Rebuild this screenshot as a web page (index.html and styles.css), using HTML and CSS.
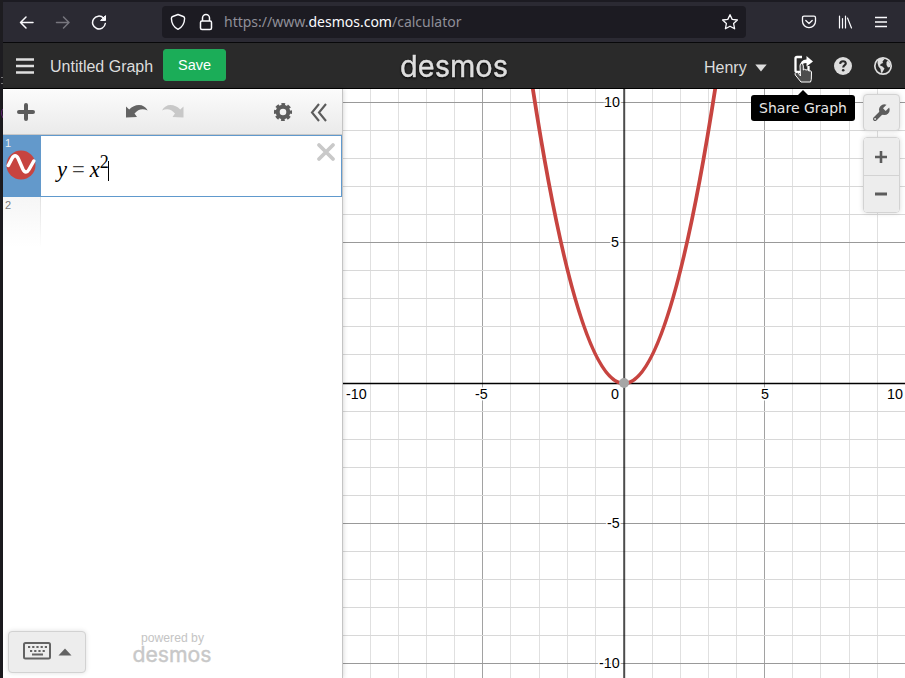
FILE: index.html
```html
<!DOCTYPE html>
<html lang="en">
<head>
<meta charset="utf-8">
<title>Desmos | Graphing Calculator</title>
<link rel="stylesheet" href="styles.css">
</head>
<body>
<div class="screen">
  <div class="edge">
    <svg width="3" height="678" viewBox="0 0 3 678" fill="none"><path d="M1 77.500H3M1 83.500H3" stroke="#777"/><path d="M3 109Q0 112 3 118" stroke="#6b2a80"/></svg>
  </div>
  <div class="window">
    <nav class="browser">
      <svg class="back" width="16" height="16" viewBox="0 0 16 16" fill="none" stroke="#fbfbfe" stroke-width="1.500" stroke-linecap="round" stroke-linejoin="round"><path d="M14 8.500H1.500M7 3L1.500 8.500L7 14"/></svg>
      <svg class="forward" width="16" height="16" viewBox="0 0 16 16" fill="none" stroke="#77767e" stroke-width="1.500" stroke-linecap="round" stroke-linejoin="round"><path d="M1.500 8.500H14M8.500 3L14 8.500L8.500 14"/></svg>
      <svg class="reload" width="16" height="16" viewBox="0 0 16 16" fill="none" stroke="#fbfbfe" stroke-width="1.500" stroke-linecap="round"><path d="M12.500 4A6.400 6.400 0 1 0 14.300 9.500"/><path d="M14.500 2V6.500H10Z" fill="#fbfbfe" stroke-width="1" stroke-linejoin="round"/></svg>
      <div class="address">
        <svg width="16" height="18" viewBox="0 0 16 18" fill="none" stroke="#fbfbfe" stroke-width="1.400" stroke-linejoin="round"><path d="M8 1.500L13.300 3.500Q14.700 4 14.600 5.500C14.500 10.500 12.500 14 8 16.300C3.500 14 1.500 10.500 1.400 5.500Q1.300 4 2.700 3.500Z"/></svg>
        <svg class="lock" width="14" height="18" viewBox="0 0 14 18" fill="none" stroke="#fbfbfe" stroke-width="1.500"><rect x="1.500" y="8" width="11" height="8.500" rx="1.500"/><path d="M3.500 8V5a3.500 3.500 0 0 1 7 0V8"/></svg>
        <span class="url">https://www.<b>desmos.com</b>/calculator</span>
        <svg class="star" width="18" height="18" viewBox="0 0 18 18" fill="none" stroke="#fbfbfe" stroke-width="1.300" stroke-linejoin="round"><path d="M9 1.700L11.200 6.400L16.400 7L12.600 10.500L13.600 15.800L9 13.200L4.400 15.800L5.400 10.500L1.600 7L6.800 6.400Z"/></svg>
      </div>
      <svg class="pocket" width="16" height="16" viewBox="0 0 16 16" fill="none" stroke="#fbfbfe" stroke-width="1.300" stroke-linecap="round" stroke-linejoin="round"><path d="M3 2.200H13Q14.500 2.200 14.500 3.700V7.200A6.500 6.500 0 0 1 1.500 7.200V3.700Q1.500 2.200 3 2.200Z"/><path d="M4.800 6.500L8 9.500L11.200 6.500"/></svg>
      <svg class="library" width="16" height="16" viewBox="0 0 16 16" fill="none" stroke="#fbfbfe" stroke-width="1.200" stroke-linecap="round"><path d="M2.500 2V14M5.500 4.500V14M8.500 2V14M10.500 4L14.500 14"/></svg>
      <svg class="more" width="14" height="16" viewBox="0 0 14 16" stroke="#fbfbfe" stroke-width="1.300"><path d="M1 3.500H13M1 8H13M1 12.500H13"/></svg>
    </nav>
    <header class="topbar">
      <div class="left">
        <svg class="menu" width="18" height="18" viewBox="0 0 18 18" stroke="#dedede" stroke-width="2.600"><path d="M0 2.500H18M0 9H18M0 15.500H18"/></svg>
        <span class="title">Untitled Graph</span>
        <button class="save">Save</button>
      </div>
      <svg class="logo" width="112" height="38" viewBox="0 0 112 38"><text x="1" y="30" textLength="108" lengthAdjust="spacingAndGlyphs">desmos</text></svg>
      <div class="right">
        <span class="user">Henry</span>
        <svg class="caret" width="12" height="8" viewBox="0 0 12 8"><path d="M.3.500H11.700L6 7.500Z" fill="#ddd"/></svg>
        <div class="share">
          <svg width="24" height="30" viewBox="0 0 24 30"><path d="M10 3H5Q3.500 3 3.500 4.500V16.500Q3.500 18 5 18H15Q16.500 18 16.500 16.500V12" fill="none" stroke="#fff" stroke-width="2.300"/><path d="M8 13Q8 5.500 14.500 5.500V2L21 7.400L14.500 12.500V9Q10 9 8 13Z" fill="#fff"/><path d="M8.500 22L8 12Q8 9.500 9.500 9.500T11.300 12V16Q12.500 14.500 14 16Q15.700 15 16.800 17Q19 16 19.500 18L19.300 25.500L18.500 28H9L3.300 21Q2.500 19.500 4 18.600T6.500 19.600Z" fill="#4d4d4d" stroke="#fff"/></svg>
          <div class="tip">Share Graph</div>
        </div>
        <svg class="help" width="20" height="20" viewBox="0 0 20 20"><circle cx="10" cy="10" r="9" fill="#ddd"/><path d="M7.100 7.800Q7.300 5.200 10 5.200T12.800 7.600C12.800 9.300 10.200 9.200 10.200 11.600" fill="none" stroke="#2a2a2a" stroke-width="2.100"/><circle cx="10.200" cy="14.200" r="1.300" fill="#2a2a2a"/></svg>
        <svg class="globe" width="20" height="20" viewBox="0 0 20 20"><circle cx="10" cy="10" r="8.200" fill="none" stroke="#ddd" stroke-width="1.700"/><path d="M5 3L9 2L11.500 3L9.500 5.500L10 7L7.700 8L7 9.500L9.500 10.500L11.500 12.500L9 17L8 16.500L7.500 13L5.500 10.500L4.500 7ZM13.500 6L15 4.500L17.500 8L17 11L15 11.500L13.500 9Z" fill="#ddd"/></svg>
      </div>
    </header>
    <main class="calc">
      <section class="panel">
        <div class="tools">
          <svg class="add" width="18" height="18" viewBox="0 0 18 18" stroke="#5c5c5c" stroke-width="4" stroke-linecap="round"><path d="M9 2V16M2 9H16"/></svg>
          <svg class="undo" width="22" height="14" viewBox="0 0 22 14"><path d="M0 1.500L3.200 4.500Q7.500 0 13 0Q18.500 0 21.700 5.500Q14 2 8.500 8.500L11 12L0 12.500Z" fill="#636363"/></svg>
          <svg class="redo" width="22" height="14" viewBox="0 0 22 14"><path d="M21.500 1.500L18.300 4.500Q14 0 8.500 0Q3 0 0 5.500Q7.500 2 13 8.500L10.500 12L21.500 12.500Z" fill="#c8c8c8"/></svg>
          <svg class="gear" width="20" height="20" viewBox="0 0 20 20" fill="none" stroke="#5c5c5c"><circle cx="10" cy="10" r="5.300" stroke-width="4"/><circle cx="10" cy="10" r="7.800" stroke-width="2.500" stroke-dasharray="3.700 2.426" stroke-dashoffset="1.850"/></svg>
          <svg class="collapse" width="18" height="20" viewBox="0 0 18 20" fill="none" stroke="#5c5c5c" stroke-width="2.100"><path d="M9 2L2 10.500L9 19M16 2L9 10.500L16 19"/></svg>
        </div>
        <div class="row active">
          <div class="tab"><span>1</span><svg width="30" height="30" viewBox="0 0 30 30"><circle cx="15" cy="15" r="14.500" fill="#c74440"/><path d="M2.300 15.500L6 8.500C8 4.800 10.300 4.800 12.200 8.500L16.800 19C18.800 23 21 23 23 19.500L27.800 11" fill="none" stroke="#fff" stroke-width="3.500" stroke-linecap="round"/></svg></div>
          <div class="math"><i>y</i><span class="eq">=</span><i>x</i><sup>2</sup><span class="cursor"></span></div>
          <svg class="close" width="20" height="20" viewBox="0 0 20 20" stroke="#c9c9c9" stroke-width="3.800" stroke-linecap="round"><path d="M3 3L17 17M17 3L3 17"/></svg>
        </div>
        <div class="row blank"><div class="tab"><span>2</span></div></div>
        <footer class="bottom">
          <button class="keypad">
            <svg width="28" height="18" viewBox="0 0 28 18" fill="none" stroke="#636363"><rect x="1" y="1" width="26" height="15.500" rx="1.500" stroke-width="2"/><path d="M5 5H24" stroke-width="2" stroke-dasharray="2.200 2"/><path d="M7 9H22" stroke-width="2" stroke-dasharray="2.200 2"/><path d="M9 12.500H20" stroke-width="2"/></svg>
            <svg width="14" height="8" viewBox="0 0 14 8"><path d="M.5 7.500L7 .5L13.500 7.500Z" fill="#636363"/></svg>
          </button>
          <div class="powered"><span>powered by</span><svg width="84" height="29" viewBox="0 0 84 29"><text x="2.500" y="17" textLength="79" lengthAdjust="spacingAndGlyphs">desmos</text></svg></div>
        </footer>
      </section>
      <section class="graph">
        <svg class="plot" width="562" height="589" viewBox="343 89 562 589">
          <g id="grid"></g>
          <path d="M624.200 89V678" stroke="#000" stroke-opacity=".7" stroke-width="2"/>
          <path d="M343 383.500H905" stroke="#000" stroke-width="1.500"/>
          <path d="M525.500 39.600Q624 727.400 722.500 39.600" fill="none" stroke="#c74440" stroke-width="3.800"/>
          <circle cx="624" cy="383" r="5" fill="#a6a6a6"/>
          <g class="ticks">
            <text x="346" y="399">-10</text><text x="475" y="399">-5</text><text x="611" y="399">0</text><text x="761" y="399">5</text><text x="887" y="399">10</text>
            <text x="604" y="107">10</text><text x="611" y="247">5</text><text x="607" y="528">-5</text><text x="599" y="668">-10</text>
          </g>
        </svg>
        <div class="controls">
          <button class="wrench"><svg width="20" height="20" viewBox="0 0 18 18"><path d="M11 7L3.600 14.400" stroke="#5c5c5c" stroke-width="3.600" stroke-linecap="round"/><circle cx="12" cy="6" r="4.800" fill="#5c5c5c"/><path d="M12 6L18 0" stroke="#ededed" stroke-width="3.400"/><circle cx="3.700" cy="14.300" r=".8" fill="#ededed"/></svg></button>
          <div class="zoom">
            <button><svg width="12" height="12" viewBox="0 0 12 12" stroke="#5c5c5c" stroke-width="2.600"><path d="M6 0V12M0 6H12"/></svg></button>
            <button><svg width="12" height="12" viewBox="0 0 12 12" stroke="#5c5c5c" stroke-width="2.800"><path d="M0 6H12"/></svg></button>
          </div>
        </div>
      </section>
    </main>
  </div>
</div>
<script src="grid.js"></script>
</body>
</html>
```
FILE: styles.css
```css
* { box-sizing: border-box; }
body { margin: 0; width: 905px; height: 678px; overflow: hidden; background: #1c1b22; font-family: "Liberation Sans", sans-serif; }
svg { display: block; flex: none; }
button { font-family: inherit; padding: 0; margin: 0; border: 0; }
.screen { display: flex; height: 678px; }
.edge { width: 3px; flex: none; background: #1d1c20; }
.window { flex: 1; display: flex; flex-direction: column; padding-top: 2px; }

.browser { height: 40px; flex: none; display: flex; align-items: center; background: #2b2a33; padding-left: 16px; }
.forward { margin-left: 20px; }
.reload { margin-left: 20px; }
.address { width: 584px; height: 32px; margin-left: 55px; padding: 0 7px 0 8px; border-radius: 4px; background: #1c1b22; display: flex; align-items: center; }
.lock { margin-left: 13px; }
.url { margin-left: 11px; margin-bottom: 1px; flex: 1; font: 14px "Noto Sans", sans-serif; color: #8f8f98; white-space: nowrap; }
.url b { font-weight: 400; color: #fbfbfe; }
.pocket { margin-left: 55px; }
.library { margin-left: 20px; }
.more { margin-left: 21px; }

.topbar { height: 47px; flex: none; border-top: 1px solid #08080a; border-bottom: 1px solid #000; background: #2a2a2a; display: flex; align-items: center; color: #ddd; }
.left { width: 396px; display: flex; align-items: center; padding-left: 13px; }
.menu { margin-top: 1px; }
.title { margin-left: 16px; margin-top: 2px; font-size: 16px; width: 104px; white-space: nowrap; }
.save { margin-left: 9px; margin-bottom: 1px; width: 63px; height: 32px; border-radius: 3px; border: 1px solid #23a85a; background: #1bad58; color: #fff; font-size: 14.500px; }
.logo { filter: drop-shadow(0 1px 1px #000); }
.logo text { font: 400 30px Inter, sans-serif; fill: #ddd; stroke: #ddd; stroke-width: .5px; }
.right { flex: 1; display: flex; align-items: center; padding-left: 193px; }
.user { width: 43px; font-size: 16px; margin-top: 5px; }
.caret { margin-left: 8px; margin-top: 4px; }
.share { position: relative; margin: 7px 0 0 24.500px; }
.tip { position: absolute; z-index: 2; left: -40.500px; top: 41px; width: 104px; height: 26px; border-radius: 3px; background: #000; color: #e6e6e6; font: 14px/26px "DejaVu Sans", sans-serif; text-align: center; white-space: nowrap; }
.tip::before { content: ""; position: absolute; left: 46px; top: -5px; border: 6px solid transparent; border-top: 0; border-bottom-color: #000; }
.help { margin-left: 17.500px; }
.globe { margin-left: 20px; }

.calc { flex: 1; display: flex; min-height: 0; }
.panel { width: 340px; flex: none; display: flex; flex-direction: column; background: #fff; border-right: 1px solid #c4c4c4; box-shadow: 0 0 5px rgba(0,0,0,.2); z-index: 1; }
.tools { height: 46px; flex: none; display: flex; align-items: center; padding-left: 14px; background: linear-gradient(#fcfcfc, #eaeaea); border-bottom: 1px solid #c8c8c8; }
.undo { margin-left: 91px; }
.redo { margin-left: 14px; }
.gear { margin-left: 89px; }
.collapse { margin-left: 17px; }
.row { display: flex; flex: none; }
.tab { width: 38px; font-size: 11px; color: #7d7d7d; }
.tab span { display: block; padding: 2px 0 0 2px; line-height: 12px; }
.active { height: 62px; border: 1px solid #6099cd; border-left: 0; }
.active .tab { background: #6399cb; color: #eee; }
.active .tab span { padding-top: 1px; }
.active .tab svg { margin: 1px 0 0 3px; }
.math { display: flex; align-items: baseline; padding: 20px 0 0 16px; flex: 1; font: 22.500px/28px "Liberation Serif", serif; color: #000; }
.math .eq { margin: 0 5px 0 5px; color: #444; }
.math sup { font-size: 18px; line-height: 1; position: relative; top: -9px; vertical-align: baseline; }
.cursor { width: 1px; height: 20px; background: #000; margin-left: -1px; position: relative; top: 4px; }
.close { margin: 6px 5px 0 0; }
.blank .tab { height: 50px; background: linear-gradient(#f6f6f6, #fff); border-right: 1px solid; border-image: linear-gradient(#e0e0e0, #fff) 1; }
.bottom { margin-top: auto; height: 47px; display: flex; padding-left: 5px; }
.keypad { width: 78px; height: 42px; display: flex; align-items: center; justify-content: center; gap: 7px; border: 1px solid #d2d2d2; border-radius: 4px; background: #ededed; box-shadow: 0 0 5px rgba(0,0,0,.13); }
.keypad svg:first-child { margin-bottom: 3px; }
.powered { margin-left: 44px; width: 84px; text-align: center; font-size: 12px; line-height: 14px; color: #c4c4c4; }
.powered span { display: block; margin-left: 1px; font-size: 12.200px; }
.powered text { font: 400 21px Inter, sans-serif; fill: #c8c8c8; stroke: #c8c8c8; stroke-width: .4px; }

.graph { flex: 1; background: #fff; position: relative; }
.ticks text { font: 14.300px "Liberation Sans", sans-serif; fill: #000; stroke: #fff; stroke-width: 3px; paint-order: stroke; }
.controls { position: absolute; top: 5px; right: 5px; width: 37px; display: flex; flex-direction: column; gap: 6px; }
.controls button { display: flex; align-items: center; justify-content: center; width: 100%; height: 37px; padding-right: 1px; background: #ededed; }
.controls .wrench, .zoom { border: 1px solid #d3d3d3; border-radius: 4px; box-shadow: 0 0 5px rgba(0,0,0,.15); overflow: hidden; }
.zoom button + button { border-top: 1px solid #d3d3d3; }
```
FILE: grid.js
```js
// Lines are snapped to whole pixels; every fifth unit is a major line.
const grid = document.getElementById('grid');
const xs = [370, 398, 426, 454, 482, 510, 539, 567, 595, null, 652, 680, 708, 736, 764, 792, 820, 849, 877];
const ys = [102, 130, 158, 186, 214, 242, 270, 298, 326, 354, null, 411, 439, 467, 495, 523, 551, 579, 607, 635, 663];
let out = '';
xs.forEach((x, i) => {
  if (x === null) return;
  const major = i % 5 === 4;
  out += `<path d="M${x + 0.5} 89V678" stroke="${major ? '#a2a2a2' : '#e0e0e0'}"/>`;
});
ys.forEach((y, i) => {
  if (y === null) return;
  const major = i % 5 === 0;
  out += `<path d="M343 ${y + 0.5}H905" stroke="${major ? '#999' : '#d8d8d8'}"/>`;
});
grid.innerHTML = out;
```
